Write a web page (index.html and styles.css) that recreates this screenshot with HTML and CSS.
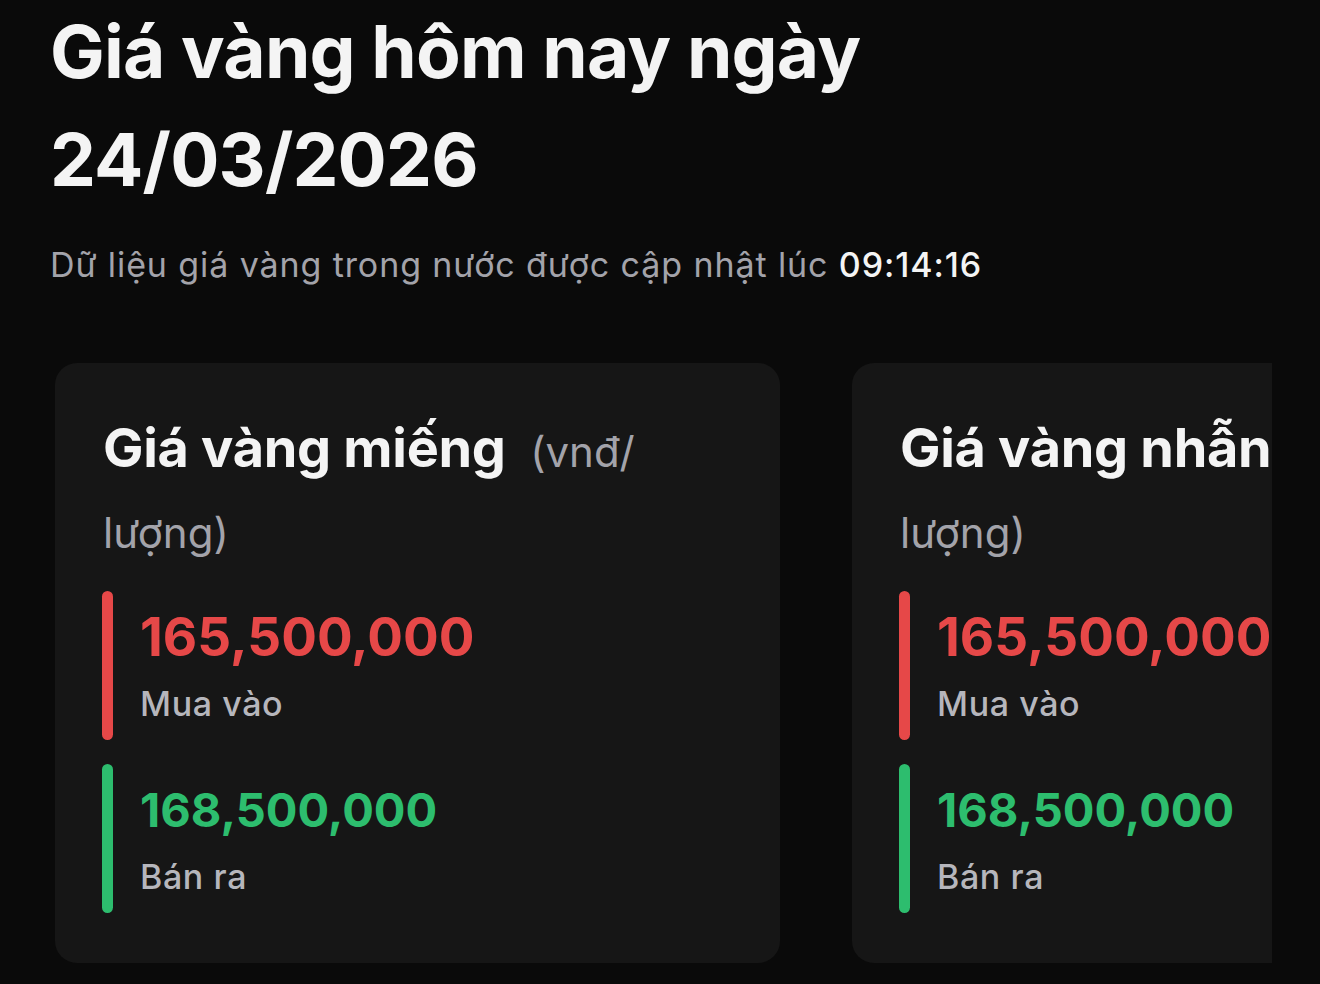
FILE: index.html
```html
<!DOCTYPE html>
<html lang="vi">
<head>
<meta charset="utf-8">
<title>Giá vàng hôm nay</title>
<link rel="stylesheet" href="styles.css">
</head>
<body>
<main class="page">
  <h1 class="title">Giá vàng hôm nay ngày 24/03/2026</h1>
  <p class="updated">Dữ liệu giá vàng trong nước được cập nhật lúc <span class="time">09:14:16</span></p>
  <div class="cards">
    <section class="card">
      <h2 class="card-title">Giá vàng miếng <span class="unit">(vnđ/ lượng)</span></h2>
      <div class="row row-buy">
        <div class="price">165,500,000</div>
        <div class="label">Mua vào</div>
      </div>
      <div class="row row-sell">
        <div class="price">168,500,000</div>
        <div class="label">Bán ra</div>
      </div>
    </section>
    <section class="card">
      <h2 class="card-title">Giá vàng nhẫn <span class="unit">(vnđ/ lượng)</span></h2>
      <div class="row row-buy">
        <div class="price">165,500,000</div>
        <div class="label">Mua vào</div>
      </div>
      <div class="row row-sell">
        <div class="price">168,500,000</div>
        <div class="label">Bán ra</div>
      </div>
    </section>
  </div>
</main>
</body>
</html>
```

FILE: styles.css
```css
html, body {
  margin: 0;
  padding: 0;
  background: #0a0a0a;
}

body {
  font-family: Inter, "Noto Sans", sans-serif;
  color: #f2f2f2;
  width: 1320px;
  height: 984px;
  overflow: hidden;
}

.page {
  padding-left: 50px;
}

.title {
  margin: -2px 0 0 0;
  max-width: 1000px;
  font-size: 73px;
  line-height: 108px;
  font-weight: 700;
  color: #f4f4f4;
  letter-spacing: -0.8px;
}

.updated {
  margin: 26px 0 0 0;
  font-size: 34px;
  line-height: 50px;
  color: #a3a3aa;
  font-weight: 400;
  letter-spacing: 0.9px;
}

.time {
  color: #f4f4f4;
  font-weight: 500;
}

.cards {
  display: flex;
  gap: 72px;
  margin-top: 73px;
  margin-left: 5px;
  width: 1217px;
  overflow: hidden;
}

.card {
  flex: 0 0 725px;
  box-sizing: border-box;
  height: 600px;
  background: #161616;
  border-radius: 22px;
  padding: 46px 48px 49px 48px;
}

.card-title {
  margin: 0 0 20px 0;
  font-size: 54px;
  line-height: 77px;
  font-weight: 700;
  color: #f4f4f4;
  letter-spacing: -0.3px;
}

.card + .card .card-title {
  white-space: nowrap;
}

.card + .card .card-title .unit {
  white-space: normal;
}

.unit {
  margin-left: 12px;
  font-size: 42px;
  font-weight: 400;
  color: #a3a3aa;
  letter-spacing: 0;
}

.row {
  box-sizing: border-box;
  height: 149px;
  padding: 14px 0 13px 37px;
  position: relative;
  display: flex;
  flex-direction: column;
  gap: 11px;
}

.row::before {
  content: "";
  position: absolute;
  left: -1px;
  top: 0;
  bottom: 0;
  width: 11px;
  border-radius: 6px;
}

.row + .row {
  margin-top: 24px;
}

.row-buy::before { background: #e64848; }
.row-sell::before { background: #2dbd6e; }

.price {
  font-size: 53px;
  line-height: 64px;
  font-weight: 700;
}

.row-buy .price { color: #e64848; }
.row-sell .price {
  color: #2dbd6e;
  font-size: 47px;
}

.label {
  font-size: 34px;
  line-height: 48px;
  font-weight: 500;
  color: #b6b6bc;
  letter-spacing: 0.6px;
}
```
